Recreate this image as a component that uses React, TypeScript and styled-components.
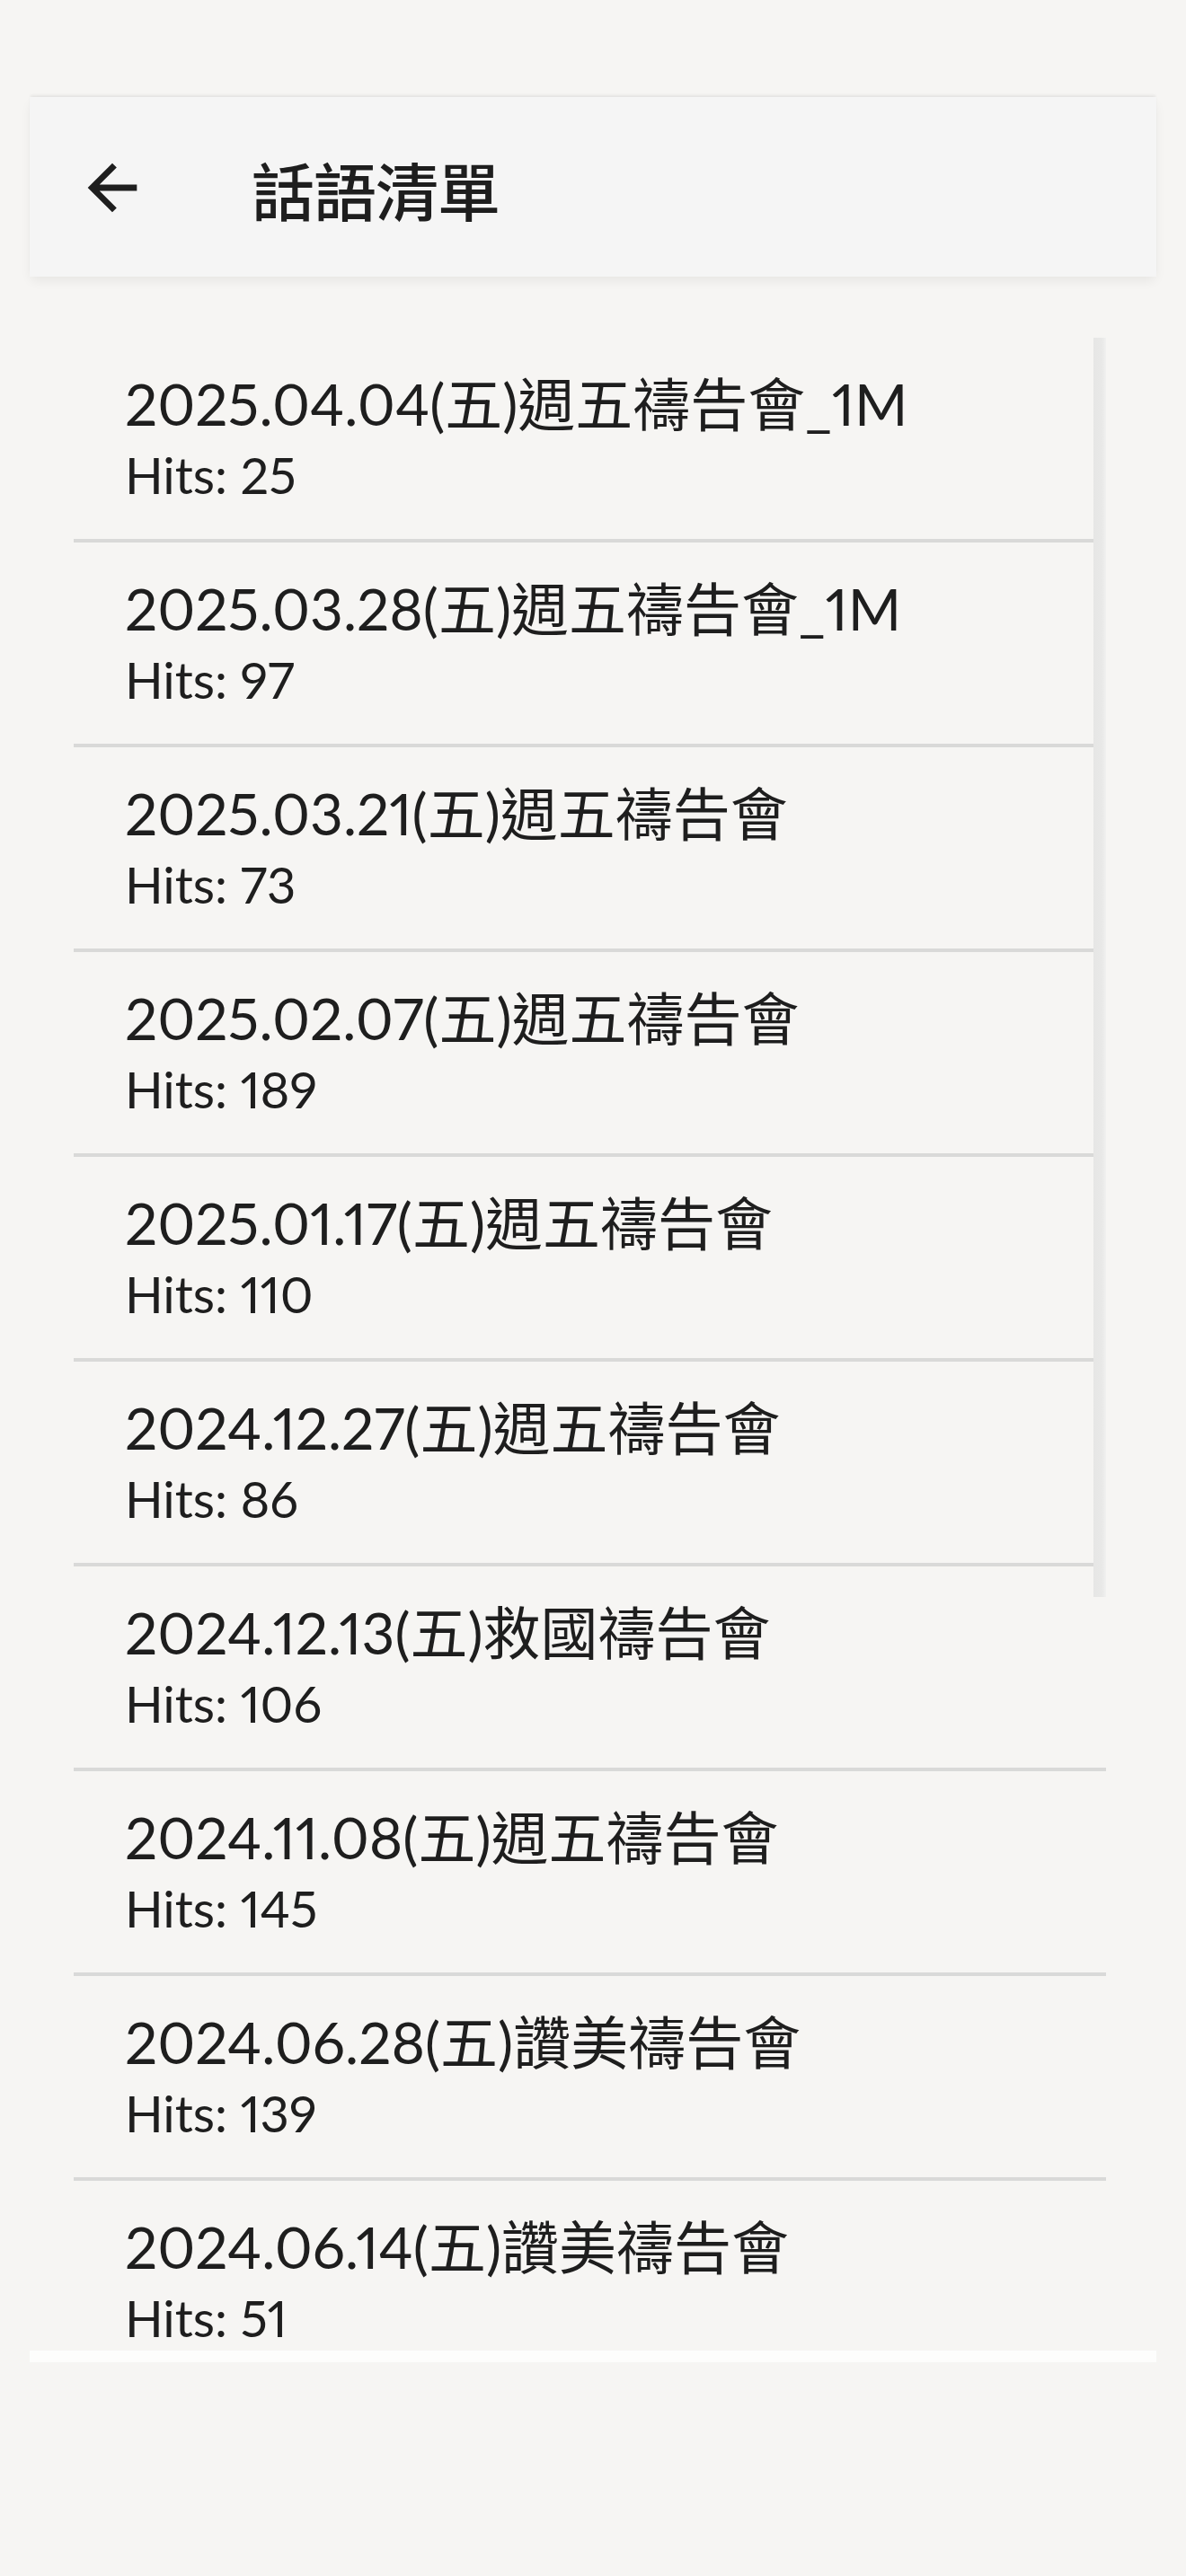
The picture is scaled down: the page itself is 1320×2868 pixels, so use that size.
import styled, { createGlobalStyle } from "styled-components";

const GlobalStyle = createGlobalStyle`
  html, body {
    margin: 0;
    padding: 0;
    background: #f6f5f3;
  }
  body {
    font-family: "Lato", "Noto Sans CJK TC", sans-serif;
    color: #1e1e1e;
  }
`;

const Page = styled.div`
  min-height: 2868px;
  padding-top: 108px;
  box-sizing: border-box;
  display: flex;
  flex-direction: column;
`;

const AppBar = styled.header`
  margin: 0 33px;
  height: 200px;
  display: flex;
  align-items: center;
  gap: 114px;
  padding-left: 51px;
  background: #f5f5f5;
  box-shadow: 0 -3px 3px -1px rgba(0, 0, 0, 0.07),
    0 6px 12px -2px rgba(0, 0, 0, 0.07);
  position: relative;
  z-index: 1;
`;

const BackButton = styled.button`
  border: none;
  background: none;
  padding: 0;
  margin-top: 2px;
  width: 82px;
  height: 82px;
  display: flex;
  color: #1e1e1e;
`;

const Title = styled.h1`
  margin: 0;
  font-family: "Noto Sans CJK TC", sans-serif;
  font-size: 70px;
  font-weight: 500;
  line-height: 80px;
  margin-top: 6px;
  letter-spacing: -1px;
`;

const ListFrame = styled.section`
  margin: 68px 33px 0;
  padding: 0 56px 0 49px;
  border-bottom: 13px solid #fdfdfc;
`;

const List = styled.div`
  position: relative;
  height: 2241px;
  overflow: hidden;
`;

const Row = styled.div`
  padding: 36px 0 30px 57px;
  border-bottom: 4px solid #d9d9d8;
  font-variant-numeric: proportional-nums;
`;

const ItemTitle = styled.div`
  font-size: 64px;
  line-height: 76px;
  white-space: nowrap;
`;

const Hits = styled.div`
  font-size: 56px;
  line-height: 82px;
`;

const ScrollThumb = styled.div<{ $top: number; $height: number }>`
  position: absolute;
  right: 0;
  width: 14px;
  top: ${(p) => p.$top}px;
  height: ${(p) => p.$height}px;
  background: linear-gradient(90deg, #e6e6e5 0%, #e9e9e8 70%, #f1f1f0 100%);
`;

const items = [
  { title: "2025.04.04(五)週五禱告會_1M", hits: 25 },
  { title: "2025.03.28(五)週五禱告會_1M", hits: 97 },
  { title: "2025.03.21(五)週五禱告會", hits: 73 },
  { title: "2025.02.07(五)週五禱告會", hits: 189 },
  { title: "2025.01.17(五)週五禱告會", hits: 110 },
  { title: "2024.12.27(五)週五禱告會", hits: 86 },
  { title: "2024.12.13(五)救國禱告會", hits: 106 },
  { title: "2024.11.08(五)週五禱告會", hits: 145 },
  { title: "2024.06.28(五)讚美禱告會", hits: 139 },
  { title: "2024.06.14(五)讚美禱告會", hits: 51 },
];

export default function App() {
  return (
    <>
      <GlobalStyle />
      <Page>
        <AppBar>
          <BackButton aria-label="back">
            <svg viewBox="0 0 24 24" width="82" height="82" fill="currentColor">
              <path d="M20 11H7.83l5.59-5.59L12 4l-8 8 8 8 1.41-1.41L7.83 13H20v-2z" />
            </svg>
          </BackButton>
          <Title>話語清單</Title>
        </AppBar>
        <ListFrame>
          <List>
            {items.map((it) => (
              <Row key={it.title}>
                <ItemTitle>{it.title}</ItemTitle>
                <Hits>Hits: {it.hits}</Hits>
              </Row>
            ))}
            <ScrollThumb $top={0} $height={1402} />
          </List>
        </ListFrame>
      </Page>
    </>
  );
}
